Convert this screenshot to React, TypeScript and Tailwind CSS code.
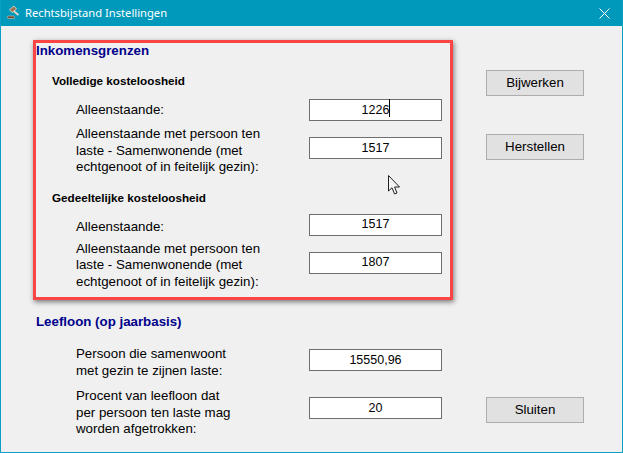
import React from 'react'

const BLUE = 'text-[#00008b]'

function Field({ label, value, caret, className, labelClass, inputClass }: { label: React.ReactNode; value: string; caret?: boolean; className?: string; labelClass?: string; inputClass?: string }) {
  return (
    <div className={`flex items-start ${className ?? ''}`}>
      <div className={`w-[233px] text-[13.3px] leading-[16.5px] text-black ${labelClass ?? ''}`}>{label}</div>
      <div className={`flex h-[22px] w-[133px] items-center justify-center border border-[#6e6e6e] bg-white text-[12.5px] text-black ${inputClass ?? ''}`}>
        <span className="relative">
          {value}
          {caret && <span className="absolute right-[-1px] top-[-2px] h-[18px] w-px bg-black" />}
        </span>
      </div>
    </div>
  )
}

function WinButton({ children, className }: { children: React.ReactNode; className?: string }) {
  return (
    <button className={`block h-[26px] w-[98px] border border-[#adadad] bg-[#e1e1e1] text-[13.3px] text-black ${className ?? ''}`}>
      {children}
    </button>
  )
}

function GavelIcon() {
  return (
    <svg width="16" height="16" viewBox="0 0 16 16" className="ml-[5px] mr-[3px]">
      <rect x="1.5" y="11" width="7" height="2.5" rx="1" fill="#6b5140" stroke="#d9c4b0" strokeWidth="0.6" />
      <path d="M7 5.5 L12.5 10" stroke="#e8d8c4" strokeWidth="1.8" />
      <path d="M3.5 4.5 L8 1 L10.5 4 L6 7.5 Z" fill="#9a7455" stroke="#f2e6d8" strokeWidth="0.7" />
    </svg>
  )
}

function MouseCursor() {
  return (
    <svg width="14" height="21" viewBox="0 0 14 21" className="absolute left-[387px] top-[175px]">
      <path d="M0.5 0.5 V16 L4 12.8 L6.6 19 L9 18 L6.6 12 H11.5 Z" fill="#f4f4f4" stroke="#222" strokeWidth="1" />
    </svg>
  )
}

const LONG_LABEL = <>Alleenstaande met persoon ten<br />laste - Samenwonende (met<br />echtgenoot of in feitelijk gezin):</>

export default function App() {
  return (
    <div className="relative flex h-[453px] w-[623px] flex-col border border-t-0 border-[#0e9fc4] bg-[#f0f0f0] font-['Liberation_Sans',Arial,sans-serif]">
      <div className="flex h-[26px] shrink-0 items-center bg-[#0099bc] text-white">
        <GavelIcon />
        <span className="font-['Noto_Sans',sans-serif] text-[11.2px]">Rechtsbijstand Instellingen</span>
        <svg width="11" height="11" viewBox="0 0 11 11" className="ml-auto mr-[12px]">
          <path d="M0.5 0.5 L10.5 10.5 M10.5 0.5 L0.5 10.5" stroke="#fff" strokeWidth="1" />
        </svg>
      </div>

      <div className="flex flex-1">
        <div className="w-[452px] pl-[32px] pt-[14px]">
          <div className="h-[260px] w-[420px] border-[3px] border-[#fb4444] shadow-[1px_2px_5px_rgba(0,0,0,0.5)]">
            <h2 className={`pt-px text-[13.3px] font-bold leading-[14px] ${BLUE}`}>Inkomensgrenzen</h2>
            <div className="pl-[16px] pt-[16px]">
              <h3 className="text-[11.7px] font-bold leading-[14px] text-black">Volledige kosteloosheid</h3>
            </div>
            <div className="pl-[40px]">
              <Field className="mt-[11px]" labelClass="mt-[3px]" label="Alleenstaande:" value="1226" caret />
              <Field className="mt-[5px]" inputClass="mt-[11px]" label={LONG_LABEL} value="1517" />
            </div>
            <div className="pl-[16px] pt-[15px]">
              <h3 className="text-[11.7px] font-bold leading-[14px] text-black">Gedeeltelijke kosteloosheid</h3>
            </div>
            <div className="pl-[40px]">
              <Field className="mt-[9px]" labelClass="mt-[5px]" label="Alleenstaande:" value="1517" />
              <Field className="mt-[5px]" inputClass="mt-[11px]" label={LONG_LABEL} value="1807" />
            </div>
          </div>

          <h2 className={`ml-[3px] mt-[14px] text-[13.3px] font-bold leading-[16px] ${BLUE}`}>Leefloon (op jaarbasis)</h2>
          <div className="ml-[43px]">
            <Field
              className="mt-[16px]"
              inputClass="mt-[3px]"
              label={<>Persoon die samenwoont<br />met gezin te zijnen laste:</>}
              value="15550,96"
            />
            <Field
              className="mt-[9px]"
              inputClass="mt-[9px]"
              label={<>Procent van leefloon dat<br />per persoon ten laste mag<br />worden afgetrokken:</>}
              value="20"
            />
          </div>
        </div>

        <div className="flex flex-col pl-[33px] pt-[44px]">
          <WinButton>Bijwerken</WinButton>
          <WinButton className="mt-[38px]">Herstellen</WinButton>
          <WinButton className="mt-[237px]">Sluiten</WinButton>
        </div>
      </div>

      <MouseCursor />
    </div>
  )
}
